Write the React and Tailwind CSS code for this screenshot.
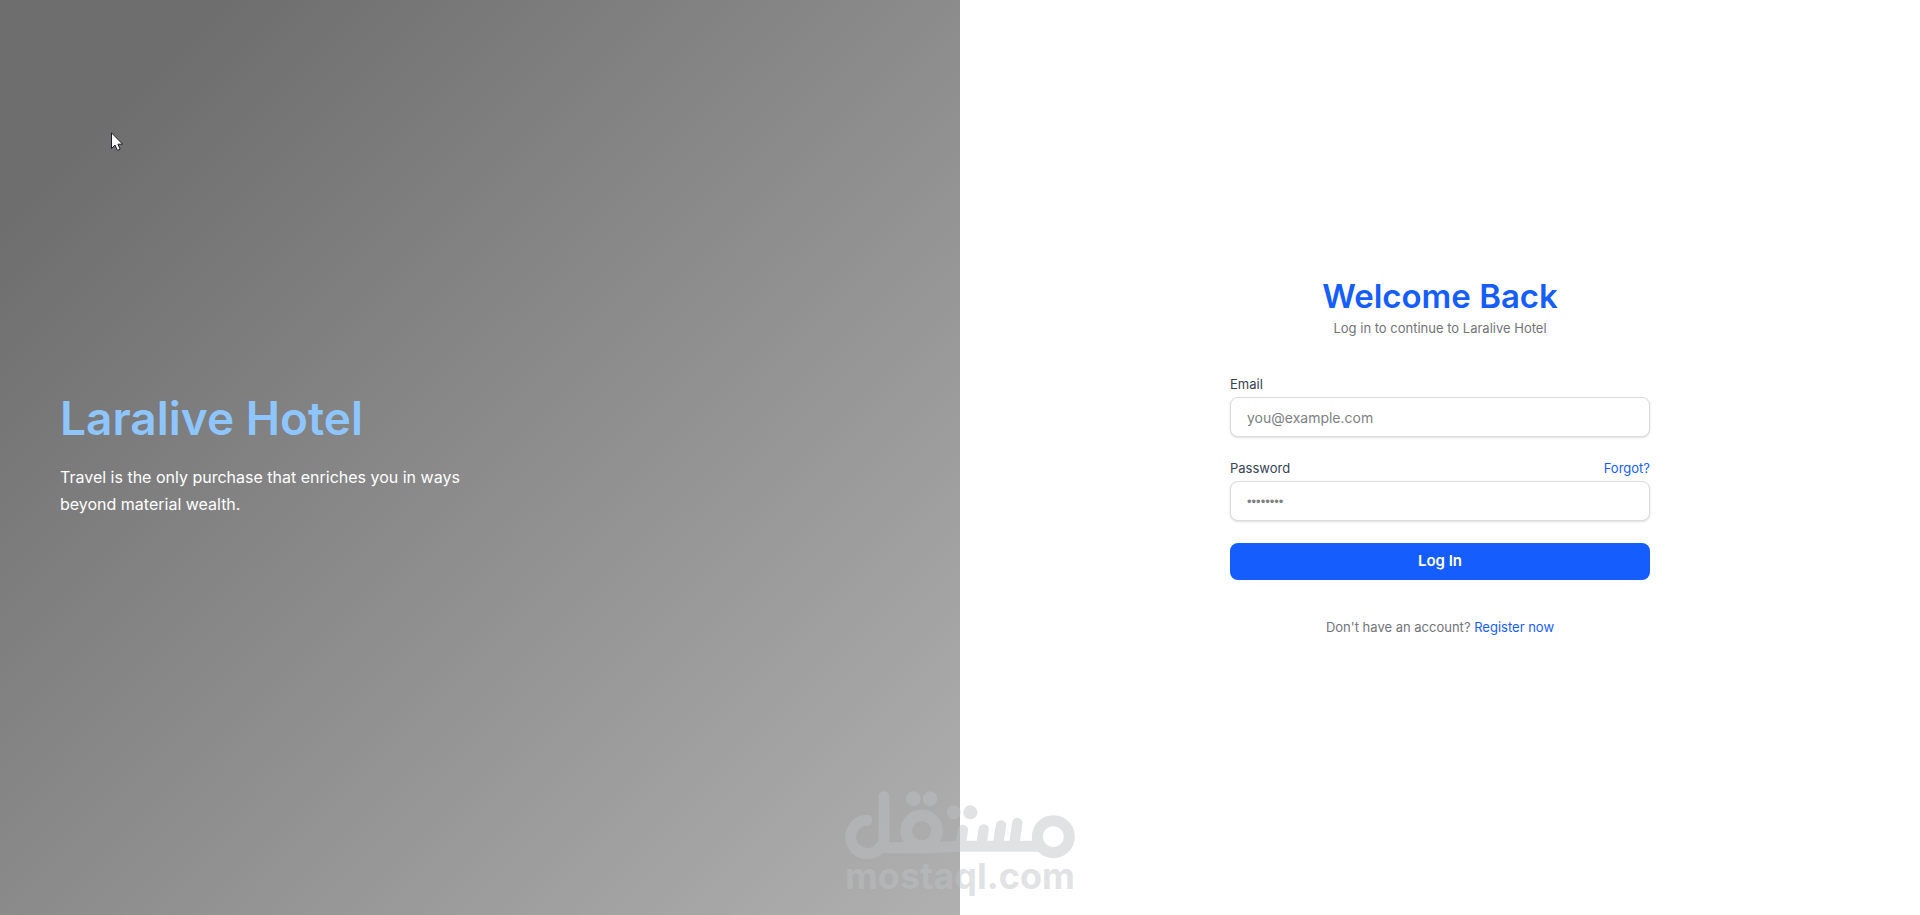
import { useId } from "react";

function Field({ label, action, ...inputProps }) {
  const id = useId();
  return (
    <div className="flex flex-col gap-[3px]">
      <div className="flex items-center justify-between text-[13px] leading-5">
        <label htmlFor={id} className="text-[#364153]">
          {label}
        </label>
        {action}
      </div>
      <input
        id={id}
        className="h-10 w-full rounded-lg border border-[#d9dbdf] bg-white px-4 text-[14px] text-gray-800 shadow-sm outline-none placeholder:text-[#7d7f83] focus:border-blue-600 [&[type=password]]:font-['Liberation_Sans',sans-serif] [&[type=password]]:text-[13px]"
        {...inputProps}
      />
    </div>
  );
}

function Watermark() {
  return (
    <svg
      viewBox="0 0 840 435"
      className="pointer-events-none absolute bottom-0 left-1/2 h-[145px] w-[280px] -translate-x-1/2 opacity-45"
      role="img"
      aria-label="mostaql.com"
    >
      <g fill="none" stroke="#bec1c4" strokeWidth="33" strokeLinecap="round" strokeLinejoin="round">
        <circle cx="700" cy="200" r="48" />
        <circle cx="305" cy="182" r="46" strokeWidth="35" />
        <path d="M192 80V200A50 50 0 1 1 141 151" />
        <path d="M178 233H340L420 229H662" />
        <path d="M429 180L421 228M491 178L484 228M543 166L533 228M592 159L582 228" strokeWidth="31" />
      </g>
      <g fill="#bec1c4">
        <circle cx="280" cy="86" r="22" />
        <circle cx="330" cy="86" r="22" />
        <circle cx="401" cy="127" r="21" />
        <circle cx="451" cy="127" r="21" />
        <text x="420" y="356" textAnchor="middle" fontSize="108" className="font-['Inter',sans-serif] font-bold">
          mostaql.com
        </text>
      </g>
    </svg>
  );
}

function Cursor() {
  return (
    <svg
      viewBox="0 0 12 19"
      className="pointer-events-none absolute top-[132px] left-[111px] h-[19px] w-3"
      aria-hidden="true"
    >
      <path
        d="M.5 .8V16.5L4 13L6.4 18.4L9.2 17.2L6.9 12.2H11.6Z"
        fill="#fff"
        stroke="#1b1b2b"
        strokeWidth="1"
      />
    </svg>
  );
}

export default function App() {
  return (
    <div className="relative grid min-h-screen grid-cols-2 overflow-hidden bg-white font-['Inter','Liberation_Sans',sans-serif]">
      <section className="flex flex-col justify-center gap-[22px] bg-linear-135/srgb from-[#6e6e6e] from-12% via-[#8b8b8b] via-50% to-[#b0b0b0] px-15 pb-1">
        <h1 className="text-[46px] leading-12 font-semibold text-[#8ec5ff]">Laralive Hotel</h1>
        <p className="max-w-md text-[16px] leading-[27px] text-white">
          Travel is the only purchase that enriches you in ways beyond material wealth.
        </p>
      </section>

      <main className="flex flex-col items-center justify-center px-6 pb-0.5">
        <div className="w-full max-w-[420px]">
          <header className="mb-9 text-center">
            <h2 className="text-[33px] leading-10 font-semibold text-[#155dfc]">Welcome Back</h2>
            <p className="mt-0.5 text-[13px] leading-5 text-[#717479]">Log in to continue to Laralive Hotel</p>
          </header>
          <form className="flex flex-col gap-[21px]" onSubmit={(e) => e.preventDefault()}>
            <Field label="Email" type="email" placeholder="you@example.com" />
            <Field
              label="Password"
              type="password"
              placeholder="••••••••"
              action={
                <a href="#forgot" className="text-[#155dfc]">
                  Forgot?
                </a>
              }
            />
            <button
              type="submit"
              className="mt-px h-[37px] w-full rounded-lg bg-[#155dfc] text-[15px] font-semibold text-white"
            >
              Log In
            </button>
          </form>
          <p className="mt-[37px] text-center text-[13px] leading-5 text-[#717479]">
            Don't have an account?{" "}
            <a href="#register" className="text-[#155dfc]">
              Register now
            </a>
          </p>
        </div>
      </main>

      <Watermark />
      <Cursor />
    </div>
  );
}
